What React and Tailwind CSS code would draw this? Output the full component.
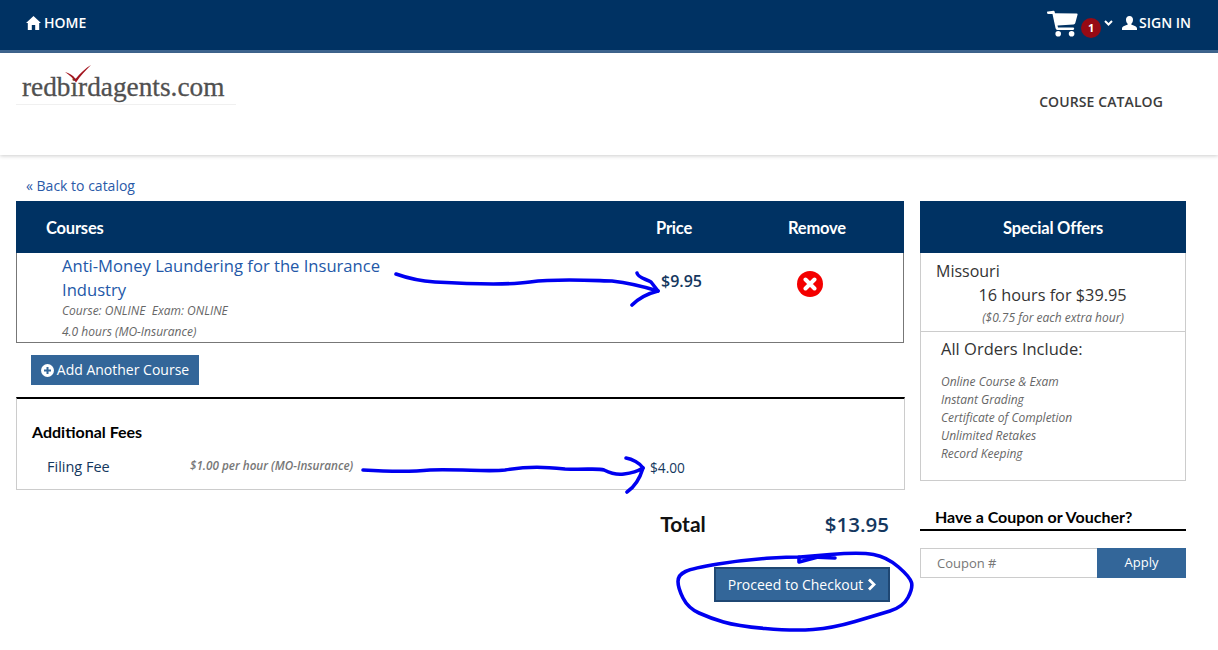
import React from "react";

const open = "font-['Open_Sans',sans-serif]";
const lato = "font-['Lato',sans-serif]";

function Home() {
  return (
    <svg width="15" height="14" viewBox="0 0 15 14" fill="#fff">
      <path d="M7.5 0 L15 7 L13.2 7 L13.2 14 L9.2 14 L9.2 9 L5.8 9 L5.8 14 L1.8 14 L1.8 7 L0 7 Z" />
    </svg>
  );
}

function Cart() {
  return (
    <svg width="31" height="27" viewBox="0 0 31 27" fill="#fff">
      <path d="M1 1.5 Q0 1 0 2.5 Q0 4 1.5 4 L5.5 4 L8.5 18 Q8.8 20 10.5 20 L26 20 Q27.2 20 27.2 18.6 Q27.2 17.4 26 17.4 L11 17.4 L10.5 15.4 L26.5 14.4 Q28 14.2 28.3 13 L30.6 4.5 Q30.8 3.4 29.6 3.4 L8 3.2 L7.6 1.6 Q7.3 .8 6.5 .8 Z" />
      <circle cx="11.2" cy="23.8" r="2.8" />
      <circle cx="24.6" cy="23.8" r="2.8" />
    </svg>
  );
}

function User() {
  return (
    <svg width="15" height="14" viewBox="0 0 15 14" fill="#fff">
      <path d="M7.5 0 C10 0 11 1.8 11 3.8 C11 5.6 10.2 7 9.4 7.8 L9.4 8.8 C11.5 9.6 15 10.4 15 12.4 L15 14 L0 14 L0 12.4 C0 10.4 3.5 9.6 5.6 8.8 L5.6 7.8 C4.8 7 4 5.6 4 3.8 C4 1.8 5 0 7.5 0 Z" />
    </svg>
  );
}

function Header() {
  return (
    <header className="h-[53px] bg-[#003263] border-b-[3px] border-[#3f6690] flex items-center justify-between pl-[26px] pr-[27px] pb-[5px]">
      <a className={`${open} flex items-center gap-[3px] text-white text-[14px] font-semibold`}>
        <Home />
        <span>HOME</span>
      </a>
      <div className={`${open} flex items-center text-white text-[14px] font-semibold`}>
        <div className="relative mr-[4px] mt-[2px] w-[53px] h-[27px]">
          <Cart />
          <span className="absolute left-[34px] top-[8px] w-5 h-5 rounded-full bg-[#960a14] text-[11px] font-bold flex items-center justify-center">1</span>
        </div>
        <svg width="9" height="6" viewBox="0 0 9 6" fill="none" stroke="#fff" strokeWidth="2" className="mr-[9px]">
          <path d="M1 1 L4.5 4.5 L8 1" />
        </svg>
        <span className="mr-[2px]"><User /></span>
        <span>SIGN IN</span>
      </div>
    </header>
  );
}

function Brand() {
  return (
    <div className="h-[102px] bg-white shadow-[0_1px_4px_rgba(0,0,0,0.2)] flex justify-between relative">
      <div className="ml-[16px] mt-[11px] w-[220px] h-[41px] border-b border-[#f0f0f0] relative">
        <span className="absolute left-[6px] top-[5px] font-['Liberation_Serif',serif] text-[27.3px] leading-[36px] text-[#505050] [-webkit-text-stroke:0.3px_#505050] whitespace-nowrap">redbirdagents.com</span>
        <svg className="absolute left-[48px] top-0" width="46" height="26" viewBox="0 0 46 26" fill="none">
          <path d="M1 8 C5 9 9 11 11.5 15 C16 9 22 4 27 1 C22 6 16 12 12 18.5 C9.5 14 5 11 1 8 Z" fill="#a3151f" />
        </svg>
      </div>
      <a className={`${open} mt-[39px] mr-[55px] text-[14px] leading-[20px] font-semibold text-[#3c3c3c] tracking-[0.1px]`}>COURSE CATALOG</a>
    </div>
  );
}

function CourseTable() {
  return (
    <section>
      <div className={`${lato} h-[52px] pt-[2px] bg-[#003263] text-white text-[16.5px] tracking-[-0.2px] font-bold flex items-center`}>
        <span className="pl-[30px] flex-1">Courses</span>
        <span className="w-[132px]">Price</span>
        <span className="w-[116px]">Remove</span>
      </div>
      <div className="h-[90px] border border-t-0 border-[#777] flex relative">
        <div className="ml-[45px] w-[380px]">
          <a className={`${open} block text-[#2358a8] text-[16.6px] leading-[24px] pt-[1px]`}>Anti-Money Laundering for the Insurance Industry</a>
          <div className={`${open} text-[12px] italic leading-[21px] -mt-[2px] text-[#666] whitespace-pre`}>Course: ONLINE  Exam: ONLINE</div>
          <div className={`${open} text-[12px] italic leading-[21px] text-[#666]`}>4.0 hours (MO-Insurance)</div>
        </div>
        <span className={`${open} absolute left-[644px] top-[17px] text-[16px] leading-[22px] font-semibold text-[#14375e]`}>$9.95</span>
        <span className="absolute left-[780px] top-[18px] w-[26px] h-[26px] rounded-full bg-[#f40000] flex items-center justify-center">
          <svg width="14" height="14" viewBox="0 0 14 14" stroke="#fff" strokeWidth="4" strokeLinecap="round">
            <path d="M2.5 2.5 L11.5 11.5 M11.5 2.5 L2.5 11.5" />
          </svg>
        </span>
      </div>
    </section>
  );
}

function Fees() {
  return (
    <section className="w-[889px] h-[93px] border-t-2 border-black border-x border-b border-x-[#ccc] border-b-[#ccc] mt-[12px] relative">
      <h3 className={`${lato} pl-[15px] pt-[22px] text-[16px] leading-[22px] font-bold text-black`}>Additional Fees</h3>
      <div className={`${open} flex items-center pl-[30px] mt-[12px] h-[24px]`}>
        <span className="w-[143px] text-[14.5px] text-[#14375e] font-medium">Filing Fee</span>
        <span className="text-[11.7px] font-semibold italic text-[#777] -mt-[3px]">$1.00 per hour (MO-Insurance)</span>
      </div>
      <span className={`${open} absolute left-[633px] top-[59px] text-[13.7px] leading-[20px] text-[#14375e]`}>$4.00</span>
    </section>
  );
}

function Totals() {
  return (
    <section>
      <div className="w-[889px] flex items-center justify-end h-[30px] mt-[19px]">
        <span className={`${lato} text-[21px] font-bold text-[#111] mr-[119px]`}>Total</span>
        <span className={`${open} text-[20.5px] font-semibold text-[#14375e] mr-[16px]`}>$13.95</span>
      </div>
      <div className="w-[889px] flex justify-end pr-[15px] mt-[28px]">
        <button className={`${open} w-[176px] h-[35px] bg-[#336699] border-2 border-[#1f4773] text-white text-[14px] flex items-center justify-center gap-[4px]`}>
          Proceed to Checkout
          <svg width="9" height="13" viewBox="0 0 9 13" fill="none" stroke="#fff" strokeWidth="2.8">
            <path d="M2 1.5 L7 6.5 L2 11.5" />
          </svg>
        </button>
      </div>
    </section>
  );
}

function Sidebar() {
  const items = ["Online Course & Exam", "Instant Grading", "Certificate of Completion", "Unlimited Retakes", "Record Keeping"];
  return (
    <aside className="w-[266px] shrink-0">
      <div className={`${lato} h-[52px] pt-[2px] bg-[#003263] text-white text-[16.5px] tracking-[-0.2px] font-bold flex items-center justify-center`}>Special Offers</div>
      <div className={`${open} h-[228px] border border-t-0 border-[#ccc]`}>
        <div className="h-[79px] border-b border-[#ccc] pt-[7px]">
          <div className="pl-[15px] text-[16px] leading-[22px] text-[#333]">Missouri</div>
          <div className="text-center text-[16.3px] leading-[26px] text-[#333] pr-[1px]">16 hours for $39.95</div>
          <div className="text-center text-[12px] italic leading-[16px] text-[#666] pt-[2px]">($0.75 for each extra hour)</div>
        </div>
        <div className="pl-[20px] pt-[5px]">
          <h4 className="text-[16.5px] leading-[24px] font-medium text-[#333]">All Orders Include:</h4>
          <ul className="mt-[12px]">
            {items.map((t) => (
              <li key={t} className="text-[12px] italic leading-[18px] text-[#666]">{t}</li>
            ))}
          </ul>
        </div>
      </div>
      <h4 className={`${lato} mt-[26px] pl-[15px] pb-[2px] h-[24px] border-b-2 border-black text-[16px] leading-[20px] font-bold text-black whitespace-nowrap`}>Have a Coupon or Voucher?</h4>
      <div className={`${open} mt-[17px] h-[30px] flex text-[13px]`}>
        <div className="w-[177px] border border-[#ccc] border-r-0 pl-[16px] pt-[1px] flex items-center text-[#777]">Coupon #</div>
        <button className="flex-1 bg-[#336699] text-white">Apply</button>
      </div>
    </aside>
  );
}

function smooth(p) {
  let d = `M${p[0][0]} ${p[0][1]}`;
  for (let i = 1; i < p.length - 1; i++) {
    const mx = (p[i][0] + p[i + 1][0]) / 2;
    const my = (p[i][1] + p[i + 1][1]) / 2;
    d += ` Q${p[i][0]} ${p[i][1]} ${mx} ${my}`;
  }
  const l = p[p.length - 1];
  return d + ` L${l[0]} ${l[1]}`;
}

function Annotations() {
  const ellipse = [[835, 558], [800, 556], [743, 560], [693, 568], [678, 575], [678, 588], [688, 608], [710, 618], [737, 626], [793, 631], [833, 628], [877, 615], [903, 607], [913, 588], [910, 577], [887, 557], [860, 552], [800, 557]];
  return (
    <svg className="absolute left-0 top-0 pointer-events-none" width="1218" height="650" viewBox="0 0 1218 650" fill="none" stroke="#0000f0" strokeWidth="3.6" strokeLinecap="round" strokeLinejoin="round">
      <path d="M396 274 C410 279 420 281 435 282 C470 284 510 285 530 282 C560 278 600 281 612 281 C630 283 645 287 658 291 C650 293 640 297 632 305" />
      <path d="M637 273 C638 278 646 279 651 282 L658 291" />
      <path d="M363 470 C380 471 410 472 430 470 C460 469 490 472 505 470 C530 466 545 467 565 469 C585 470 598 468 604 470 C612 474 618 475 624 474 C632 473 638 471 643 468 C640 478 636 486 627 492" />
      <path d="M626 458 C632 459 640 463 643 468" />
      <path d={smooth(ellipse)} />
      <path d="M799 562 L799 557 M799 562 L818 557" />
    </svg>
  );
}

export default function App() {
  return (
    <div className="relative w-[1218px] h-[650px] overflow-hidden bg-white">
      <Header />
      <Brand />
      <main className="pt-[21px] px-[16px]">
        <a className={`${open} block ml-[10px] text-[14px] leading-[20px] text-[#2a5aa8] h-[25px]`}>« Back to catalog</a>
        <div className="flex gap-[16px] items-start">
          <div className="w-[888px] shrink-0">
            <CourseTable />
            <button className={`${open} ml-[15px] mt-[12px] h-[30px] w-[168px] pb-[2px] bg-[#336699] text-white text-[14px] flex items-center justify-center gap-[3px]`}>
              <svg width="13" height="13" viewBox="0 0 13 13" className="mt-[2px]">
                <circle cx="6.5" cy="6.5" r="6.5" fill="#fff" />
                <path d="M6.5 3 V10 M3 6.5 H10" stroke="#336699" strokeWidth="2" />
              </svg>
              Add Another Course
            </button>
            <Fees />
            <Totals />
          </div>
          <Sidebar />
        </div>
      </main>
      <Annotations />
    </div>
  );
}
